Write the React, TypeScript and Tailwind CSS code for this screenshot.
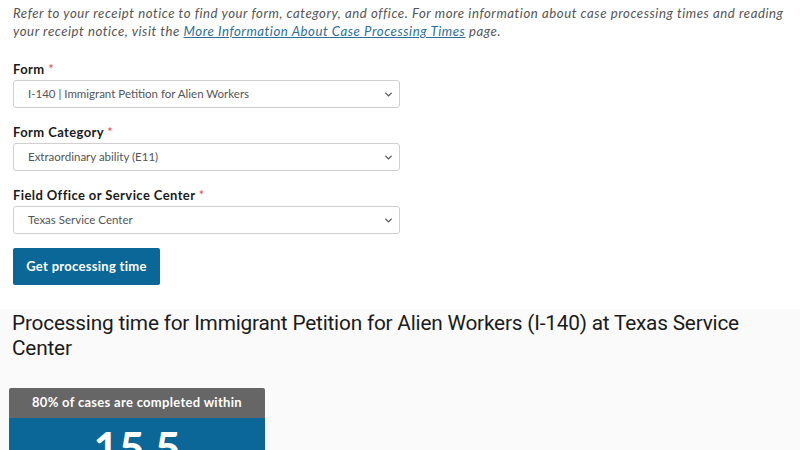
import React from 'react';
import { ChevronDown } from 'lucide-react';

const fields = [
  { label: 'Form', value: 'I-140 | Immigrant Petition for Alien Workers' },
  { label: 'Form Category', value: 'Extraordinary ability (E11)' },
  { label: 'Field Office or Service Center', value: 'Texas Service Center' },
];

function SelectField({ label, value }: { label: string; value: string }) {
  return (
    <div className="flex flex-col">
      <label className="text-[13px] font-bold text-[#1b1b1b] leading-[18px] tracking-[0.4px]">
        {label} <span className="text-[#d9534f] font-normal">*</span>
      </label>
      <div className="mt-[2px] w-[387px] h-[28px] border border-[#cfcfcf] rounded-[3px] bg-white flex items-center justify-between pl-[14px] pr-[5px]">
        <span className="text-[11.5px] text-[#555]">{value}</span>
        <ChevronDown size={11} strokeWidth={3} className="text-[#555]" />
      </div>
    </div>
  );
}

export default function App() {
  return (
    <div className="w-[800px] h-[450px] overflow-hidden bg-white font-['Lato',sans-serif]">
      <div className="pl-[13px] pt-[4px]">
        <p className="text-[13.2px] italic leading-[18px] text-[#555] tracking-[0.55px]">
          Refer to your receipt notice to find your form, category, and office. For more information about case processing times and reading your receipt notice, visit the{' '}
          <a className="text-[#2d6f9a] underline">More Information About Case Processing Times</a> page.
        </p>
        <div className="mt-[20px] flex flex-col gap-[15px]">
          {fields.map((f) => (
            <SelectField key={f.label} label={f.label} value={f.value} />
          ))}
        </div>
        <button className="mt-[14px] h-[37px] w-[147px] bg-[#0b6797] text-white text-[13px] font-bold rounded-[2px] tracking-[0.3px]">
          Get processing time
        </button>
      </div>
      <div className="mt-[24px] bg-[#fafafa] h-[200px] px-[12px] pt-[2px]">
        <h2 className="font-['Roboto',sans-serif] text-[20.8px] leading-[25px] text-[#1b1b1b] tracking-[-0.2px]">
          Processing time for Immigrant Petition for Alien Workers (I-140) at Texas Service Center
        </h2>
        <div className="mt-[27px] -ml-[3px] w-[256px] rounded-t-[2px] overflow-hidden">
          <div className="h-[30px] bg-[#666] flex items-center justify-center text-white text-[13px] font-bold tracking-[0.3px]">
            80% of cases are completed within
          </div>
          <div className="bg-[#0b6797] h-[60px] flex justify-center pt-[4px]">
            <span className="text-white text-[44px] font-bold leading-[50px]">15.5</span>
          </div>
        </div>
      </div>
    </div>
  );
}
